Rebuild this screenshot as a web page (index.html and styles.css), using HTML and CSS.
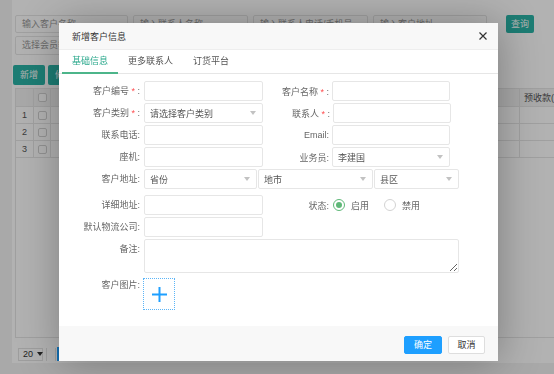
FILE: index.html
```html
<!DOCTYPE html>
<html lang="zh-CN">
<head>
    <meta charset="UTF-8">
    <meta name="viewport" content="width=device-width, initial-scale=1.0">
    <title>客户管理</title>
    <link rel="stylesheet" href="styles.css">
</head>
<body>

<!-- Pagina de fondo (lista de clientes) -->
<div class="page">
    <div class="search-row">
        <div class="s-input w113">输入客户名称</div>
        <div class="s-input w115">输入联系人名称</div>
        <div class="s-input w115">输入联系人电话/手机号</div>
        <div class="s-input w114">输入客户地址</div>
        <div class="btn-teal btn-query">查询</div>
    </div>
    <div class="search-row row2">
        <div class="s-input w113">选择会员等级</div>
    </div>
    <div class="toolbar">
        <div class="btn-teal">新增</div>
        <div class="btn-teal">修改</div>
    </div>
    <div class="grid">
        <div class="grid-row grid-head">
            <div class="c-num"></div>
            <div class="c-chk"><i class="chk"></i></div>
            <div class="c-mid"></div>
            <div class="c-last">预收款(元)</div>
        </div>
        <div class="grid-row">
            <div class="c-num">1</div>
            <div class="c-chk"><i class="chk"></i></div>
            <div class="c-mid"></div>
            <div class="c-last"></div>
        </div>
        <div class="grid-row">
            <div class="c-num">2</div>
            <div class="c-chk"><i class="chk"></i></div>
            <div class="c-mid"></div>
            <div class="c-last"></div>
        </div>
        <div class="grid-row">
            <div class="c-num">3</div>
            <div class="c-chk"><i class="chk"></i></div>
            <div class="c-mid"></div>
            <div class="c-last"></div>
        </div>
    </div>
    <div class="pager">
        <div class="pager-size">20 <i class="tri"></i></div>
        <div class="pager-sep"></div>
        <div class="pager-cur">1</div>
    </div>
</div>

<div class="shade"></div>

<!-- Ventana: nuevo cliente -->
<div class="dialog">
    <div class="dialog-title">
        <span>新增客户信息</span>
        <svg class="close" width="8" height="8" viewBox="0 0 8 8">
            <path d="M0.5 0.5 L7.5 7.5 M7.5 0.5 L0.5 7.5" stroke="#333" stroke-width="1.2" fill="none"/>
        </svg>
    </div>

    <div class="tabs">
        <div class="tab active">基础信息</div>
        <div class="tab">更多联系人</div>
        <div class="tab">订货平台</div>
    </div>

    <div class="form">
        <div class="row">
            <label class="lbl">客户编号 <em>*</em> :</label>
            <input class="inp w119" type="text">
            <label class="lbl-r">客户名称 <em>*</em> :</label>
            <input class="inp w118" type="text">
        </div>
        <div class="row">
            <label class="lbl">客户类别 <em>*</em> :</label>
            <div class="sel w119"><span>请选择客户类别</span><i class="tri"></i></div>
            <label class="lbl-r">联系人 <em>*</em> :</label>
            <input class="inp w118" type="text">
        </div>
        <div class="row">
            <label class="lbl">联系电话:</label>
            <input class="inp w119" type="text">
            <label class="lbl-r">Email:</label>
            <input class="inp w118" type="text">
        </div>
        <div class="row">
            <label class="lbl">座机:</label>
            <input class="inp w119" type="text">
            <label class="lbl-r">业务员:</label>
            <div class="sel w118"><span>李建国</span><i class="tri"></i></div>
        </div>
        <div class="row">
            <label class="lbl">客户地址:</label>
            <div class="sel w113"><span>省份</span><i class="tri"></i></div>
            <div class="sel w115"><span>地市</span><i class="tri"></i></div>
            <div class="sel w85"><span>县区</span><i class="tri"></i></div>
        </div>
        <div class="row row-status">
            <label class="lbl">详细地址:</label>
            <input class="inp w119" type="text">
            <label class="lbl-r">状态:</label>
            <div class="radios">
                <span class="radio on"></span><span class="radio-txt">启用</span>
                <span class="radio"></span><span class="radio-txt">禁用</span>
            </div>
        </div>
        <div class="row">
            <label class="lbl">默认物流公司:</label>
            <input class="inp w119" type="text">
        </div>
        <div class="row row-top">
            <label class="lbl">备注:</label>
            <textarea class="memo"></textarea>
        </div>
        <div class="row row-top row-upload">
            <label class="lbl">客户图片:</label>
            <div class="upload">
                <svg width="15" height="15" viewBox="0 0 15 15">
                    <path d="M7.5 0 V15 M0 7.5 H15" stroke="#1e9fff" stroke-width="2" fill="none"/>
                </svg>
            </div>
        </div>
    </div>

    <div class="dialog-btns">
        <div class="btn btn-ok">确定</div>
        <div class="btn btn-cancel">取消</div>
    </div>
</div>

</body>
</html>
```

FILE: styles.css
```css
* {
    box-sizing: border-box;
}

body {
    margin: 0;
    height: 374px;
    overflow: hidden;
    background: #f2f2f2;
    font-family: "Liberation Sans", "Noto Sans CJK SC", sans-serif;
    font-size: 9px;
    color: #666;
}

/* ---- pagina de fondo ---- */
.page {
    margin-left: 12px;
    height: 363px;
    padding: 15px 0 0 3px;
    background: #fff;
    overflow: hidden;
}

.search-row {
    display: flex;
    gap: 5px;
}

.row2 {
    margin-top: 3px;
}

.s-input {
    height: 18px;
    line-height: 16px;
    padding-left: 6px;
    border: 1px solid #e6e6e6;
    border-radius: 2px;
    color: #999;
    white-space: nowrap;
    overflow: hidden;
}

.row2 .s-input {
    height: 19px;
    line-height: 17px;
}

.w113 { width: 113px; }
.w114 { width: 114px; }
.w115 { width: 115px; }
.w118 { width: 118px; }
.w119 { width: 119px; }
.w85 { width: 85px; }

.btn-teal {
    height: 20px;
    line-height: 20px;
    padding: 0 7px;
    background: #2ab3a6;
    color: #fff;
    border-radius: 2px;
}

.btn-query {
    height: 18px;
    line-height: 18px;
    width: 28px;
    padding: 0;
    text-align: center;
    margin-left: 14px;
}

.toolbar {
    display: flex;
    gap: 3px;
    margin: 10px 0 0 -2px;
}

.grid {
    margin-top: 3px;
    width: 600px;
    height: 250px;
    border: 1px solid #e6e6e6;
}

.grid-row {
    display: flex;
    height: 17px;
    border-bottom: 1px solid #e6e6e6;
}

.grid-head {
    background: #f2f2f2;
    height: 18px;
}

.grid-row > div {
    display: flex;
    align-items: center;
    border-right: 1px solid #e6e6e6;
}

.c-num { width: 18px; justify-content: center; color: #555; }
.c-chk { width: 17px; justify-content: center; }
.c-mid { width: 469px; }
.c-last { flex: 1; padding-left: 4px; color: #555; }

.chk {
    width: 9px;
    height: 9px;
    border: 1px solid #d2d2d2;
    border-radius: 2px;
    background: #fff;
}

.pager {
    display: flex;
    align-items: center;
    margin-top: 9px;
    padding-left: 3px;
}

.pager-size {
    display: flex;
    align-items: center;
    gap: 4px;
    width: 25px;
    height: 13px;
    padding-left: 4px;
    border: 1px solid #e2e2e2;
    color: #333;
}

.pager-size .tri {
    border-top-color: #333;
}

.pager-sep {
    width: 10px;
    height: 13px;
    margin-left: 3px;
    border-left: 1px solid #e2e2e2;
    border-right: 1px solid #e2e2e2;
}

.pager-cur {
    width: 16px;
    height: 14px;
    margin-left: 1px;
    background: #1e9fff;
    color: #fff;
    text-align: center;
}

.shade {
    position: fixed;
    top: 0;
    left: 0;
    right: 0;
    bottom: 0;
    background: rgba(0, 0, 0, 0.3);
}

/* ---- ventana ---- */
.dialog {
    position: absolute;
    left: 59px;
    top: 23px;
    width: 439px;
    height: 338px;
    display: flex;
    flex-direction: column;
    background: #fff;
    box-shadow: 1px 1px 40px rgba(0, 0, 0, 0.3);
}

.dialog-title {
    display: flex;
    justify-content: space-between;
    align-items: center;
    height: 27px;
    padding: 0 11px 0 13px;
    background: #f8f8f8;
    border-bottom: 1px solid #eee;
    color: #333;
}

.tabs {
    display: flex;
    height: 24px;
    padding-left: 3px;
    border-bottom: 1px solid #e6e6e6;
}

.tab {
    height: 24px;
    line-height: 23px;
    padding: 0 10px;
    color: #555;
}

.tab.active {
    color: #2aa88c;
    border-bottom: 2px solid #4cb58a;
}

.form {
    padding-top: 7px;
}

.row {
    display: flex;
    align-items: center;
    height: 20px;
    margin-bottom: 2px;
}

.row-status {
    margin-top: 6px;
}

.row-top {
    align-items: flex-start;
    height: auto;
}

.row-upload {
    margin-top: 5px;
}

.row-upload .lbl {
    line-height: 15px;
}

.lbl {
    flex-shrink: 0;
    width: 82px;
    padding-right: 1px;
    margin-right: 3px;
    text-align: right;
    line-height: 20px;
}

.lbl-r {
    flex-shrink: 0;
    width: 66px;
    margin-right: 3px;
    text-align: right;
}

em {
    font-style: normal;
    color: #ff4d4f;
}

.inp, .sel, .memo {
    height: 20px;
    border: 1px solid #e6e6e6;
    border-radius: 2px;
    background: #fff;
    font: inherit;
    color: #555;
}

.inp {
    padding: 0 5px;
    outline: none;
}

.sel {
    display: flex;
    justify-content: space-between;
    align-items: center;
    padding: 0 6px 0 5px;
    margin-right: 1px;
}

.tri {
    width: 0;
    height: 0;
    border-left: 3.5px solid transparent;
    border-right: 3.5px solid transparent;
    border-top: 4px solid #c2c2c2;
}

.radios {
    display: flex;
    align-items: center;
    padding-left: 1px;
}

.radio {
    width: 12px;
    height: 12px;
    border: 1px solid #d2d2d2;
    border-radius: 50%;
    display: flex;
    align-items: center;
    justify-content: center;
}

.radio.on {
    border-color: #5fb878;
}

.radio.on::after {
    content: "";
    width: 6px;
    height: 6px;
    border-radius: 50%;
    background: #5fb878;
}

.radio-txt {
    margin: 0 15px 0 6px;
    color: #666;
}

.memo {
    width: 315px;
    height: 34px;
    padding: 4px 5px;
    outline: none;
}

.upload {
    width: 32px;
    height: 32px;
    border: 1px dotted #5cb5f7;
    display: flex;
    align-items: center;
    justify-content: center;
    margin-left: -1px;
}

.dialog-btns {
    margin-top: auto;
    height: 35px;
    display: flex;
    justify-content: flex-end;
    gap: 6px;
    padding: 10px 13px 0;
    background: #f8f8f8;
}

.btn {
    height: 18px;
    line-height: 16px;
    text-align: center;
    border-radius: 2px;
    border: 1px solid #dedede;
}

.btn-ok {
    width: 38px;
    background: #1e9fff;
    border-color: #1e9fff;
    color: #fff;
}

.btn-cancel {
    width: 37px;
    background: #fff;
    color: #333;
}
```
